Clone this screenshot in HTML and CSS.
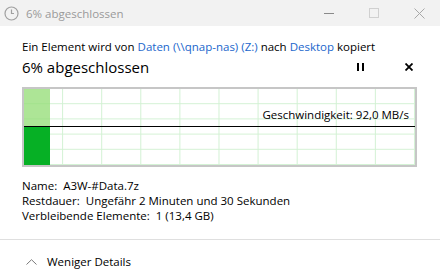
FILE: index.html
```html
<!DOCTYPE html>
<html lang="de">
<head>
    <meta charset="UTF-8">
    <title>6% abgeschlossen</title>
    <link rel="stylesheet" href="styles.css">
</head>
<body>
    <div class="window">
        <div class="titlebar">
            <svg class="clock" width="15" height="15" viewBox="0 0 15 15">
                <circle cx="7.5" cy="7.5" r="6.5" fill="none" stroke="#a0a0a0" stroke-width="1.2"/>
                <path d="M7.5 3.5 V7.5 H10" fill="none" stroke="#a0a0a0" stroke-width="1.2"/>
            </svg>
            <span class="title">6% abgeschlossen</span>
            <div class="controls">
                <span class="ctl min"></span>
                <span class="ctl max"></span>
                <svg class="ctl" width="11" height="11" viewBox="0 0 11 11">
                    <path d="M0.5 0.5 L10.5 10.5 M10.5 0.5 L0.5 10.5" stroke="#a8a8a8" stroke-width="1"/>
                </svg>
            </div>
        </div>

        <div class="content">
            <p class="source">Ein Element wird von <a>Daten (\\qnap-nas) (Z:)</a> nach <a>Desktop</a> kopiert</p>
            <div class="status">
                <h1>6% abgeschlossen</h1>
                <div class="actions">
                    <svg width="7" height="8" viewBox="0 0 7 8">
                        <rect x="0" y="0" width="2" height="8" fill="#000"/>
                        <rect x="5" y="0" width="2" height="8" fill="#000"/>
                    </svg>
                    <svg width="8" height="8" viewBox="0 0 8 8">
                        <path d="M0.5 0.5 L7.5 7.5 M7.5 0.5 L0.5 7.5" stroke="#000" stroke-width="1.8"/>
                    </svg>
                </div>
            </div>

            <div class="graph">
                <div class="fill">
                    <div class="fill-top"></div>
                    <div class="fill-bottom"></div>
                </div>
                <div class="speed-line"></div>
                <span class="speed">Geschwindigkeit: 92,0 MB/s</span>
            </div>

            <div class="details">
                <div>Name:&nbsp; A3W-#Data.7z</div>
                <div>Restdauer:&nbsp; Ungefähr 2 Minuten und 30 Sekunden</div>
                <div>Verbleibende Elemente:&nbsp; 1 (13,4 GB)</div>
            </div>
        </div>

        <div class="footer">
            <svg width="11" height="6" viewBox="0 0 11 6">
                <path d="M0.5 5.5 L5.5 0.7 L10.5 5.5" fill="none" stroke="#7a7a7a" stroke-width="1"/>
            </svg>
            <span>Weniger Details</span>
        </div>
    </div>
</body>
</html>
```

FILE: styles.css
```css
body {
    margin: 0;
    padding: 0;
    background: #ffffff;
    font-family: "Open Sans", "Noto Sans", sans-serif;
    font-size: 11.5px;
    color: #000000;
}

.window {
    width: 440px;
    height: 278px;
    overflow: hidden;
}

.titlebar {
    height: 26px;
    background-color: #f2f2f2;
    display: flex;
    align-items: center;
}

.clock {
    margin: 0 7px 0 4px;
}

.title {
    color: #9a9a9a;
    font-size: 11.5px;
}

.controls {
    margin-left: auto;
    display: flex;
    align-items: center;
    gap: 35px;
    padding-right: 15px;
}

.ctl.min {
    width: 10px;
    height: 1px;
    background-color: #8a8a8a;
}

.ctl.max {
    width: 8px;
    height: 8px;
    border: 1px solid #d0d0d0;
}

.content {
    padding: 13px 23px 0 22px;
}

.source {
    margin: 0;
    line-height: 16px;
}

.source a {
    color: #1a66cc;
}

.status {
    display: flex;
    align-items: center;
    margin-top: 1px;
}

h1 {
    margin: 0;
    font-size: 15px;
    font-weight: normal;
    line-height: 22px;
}

.actions {
    margin-left: auto;
    display: flex;
    align-items: center;
    gap: 41px;
    padding-right: 4px;
}

.graph {
    position: relative;
    margin-top: 9px;
    height: 76px;
    border: 2px solid #c6c6c6;
    background-image:
        linear-gradient(to right, transparent calc(100% - 1px), #d2f1d3 calc(100% - 1px)),
        linear-gradient(to bottom, transparent calc(100% - 1px), #d2f1d3 calc(100% - 1px));
    background-size: 10% 100%, 100% 20%;
}

.fill {
    position: absolute;
    left: 0;
    top: 0;
    bottom: 0;
    width: 26px;
    display: flex;
    flex-direction: column;
}

.fill-top {
    flex: 1;
    background-color: rgba(150, 222, 120, 0.78);
}

.fill-bottom {
    height: 39px;
    background-color: #06b025;
}

.speed-line {
    position: absolute;
    left: 0;
    right: 0;
    top: 37px;
    height: 1px;
    background-color: #000000;
}

.speed {
    position: absolute;
    right: 6px;
    top: 18px;
    line-height: 16px;
}

.details {
    margin-top: 11px;
    line-height: 15px;
}

.footer {
    margin-top: 16px;
    border-top: 1px solid #dfdfdf;
    padding: 14px 0 0 26px;
    display: flex;
    align-items: center;
    gap: 10px;
}
```
